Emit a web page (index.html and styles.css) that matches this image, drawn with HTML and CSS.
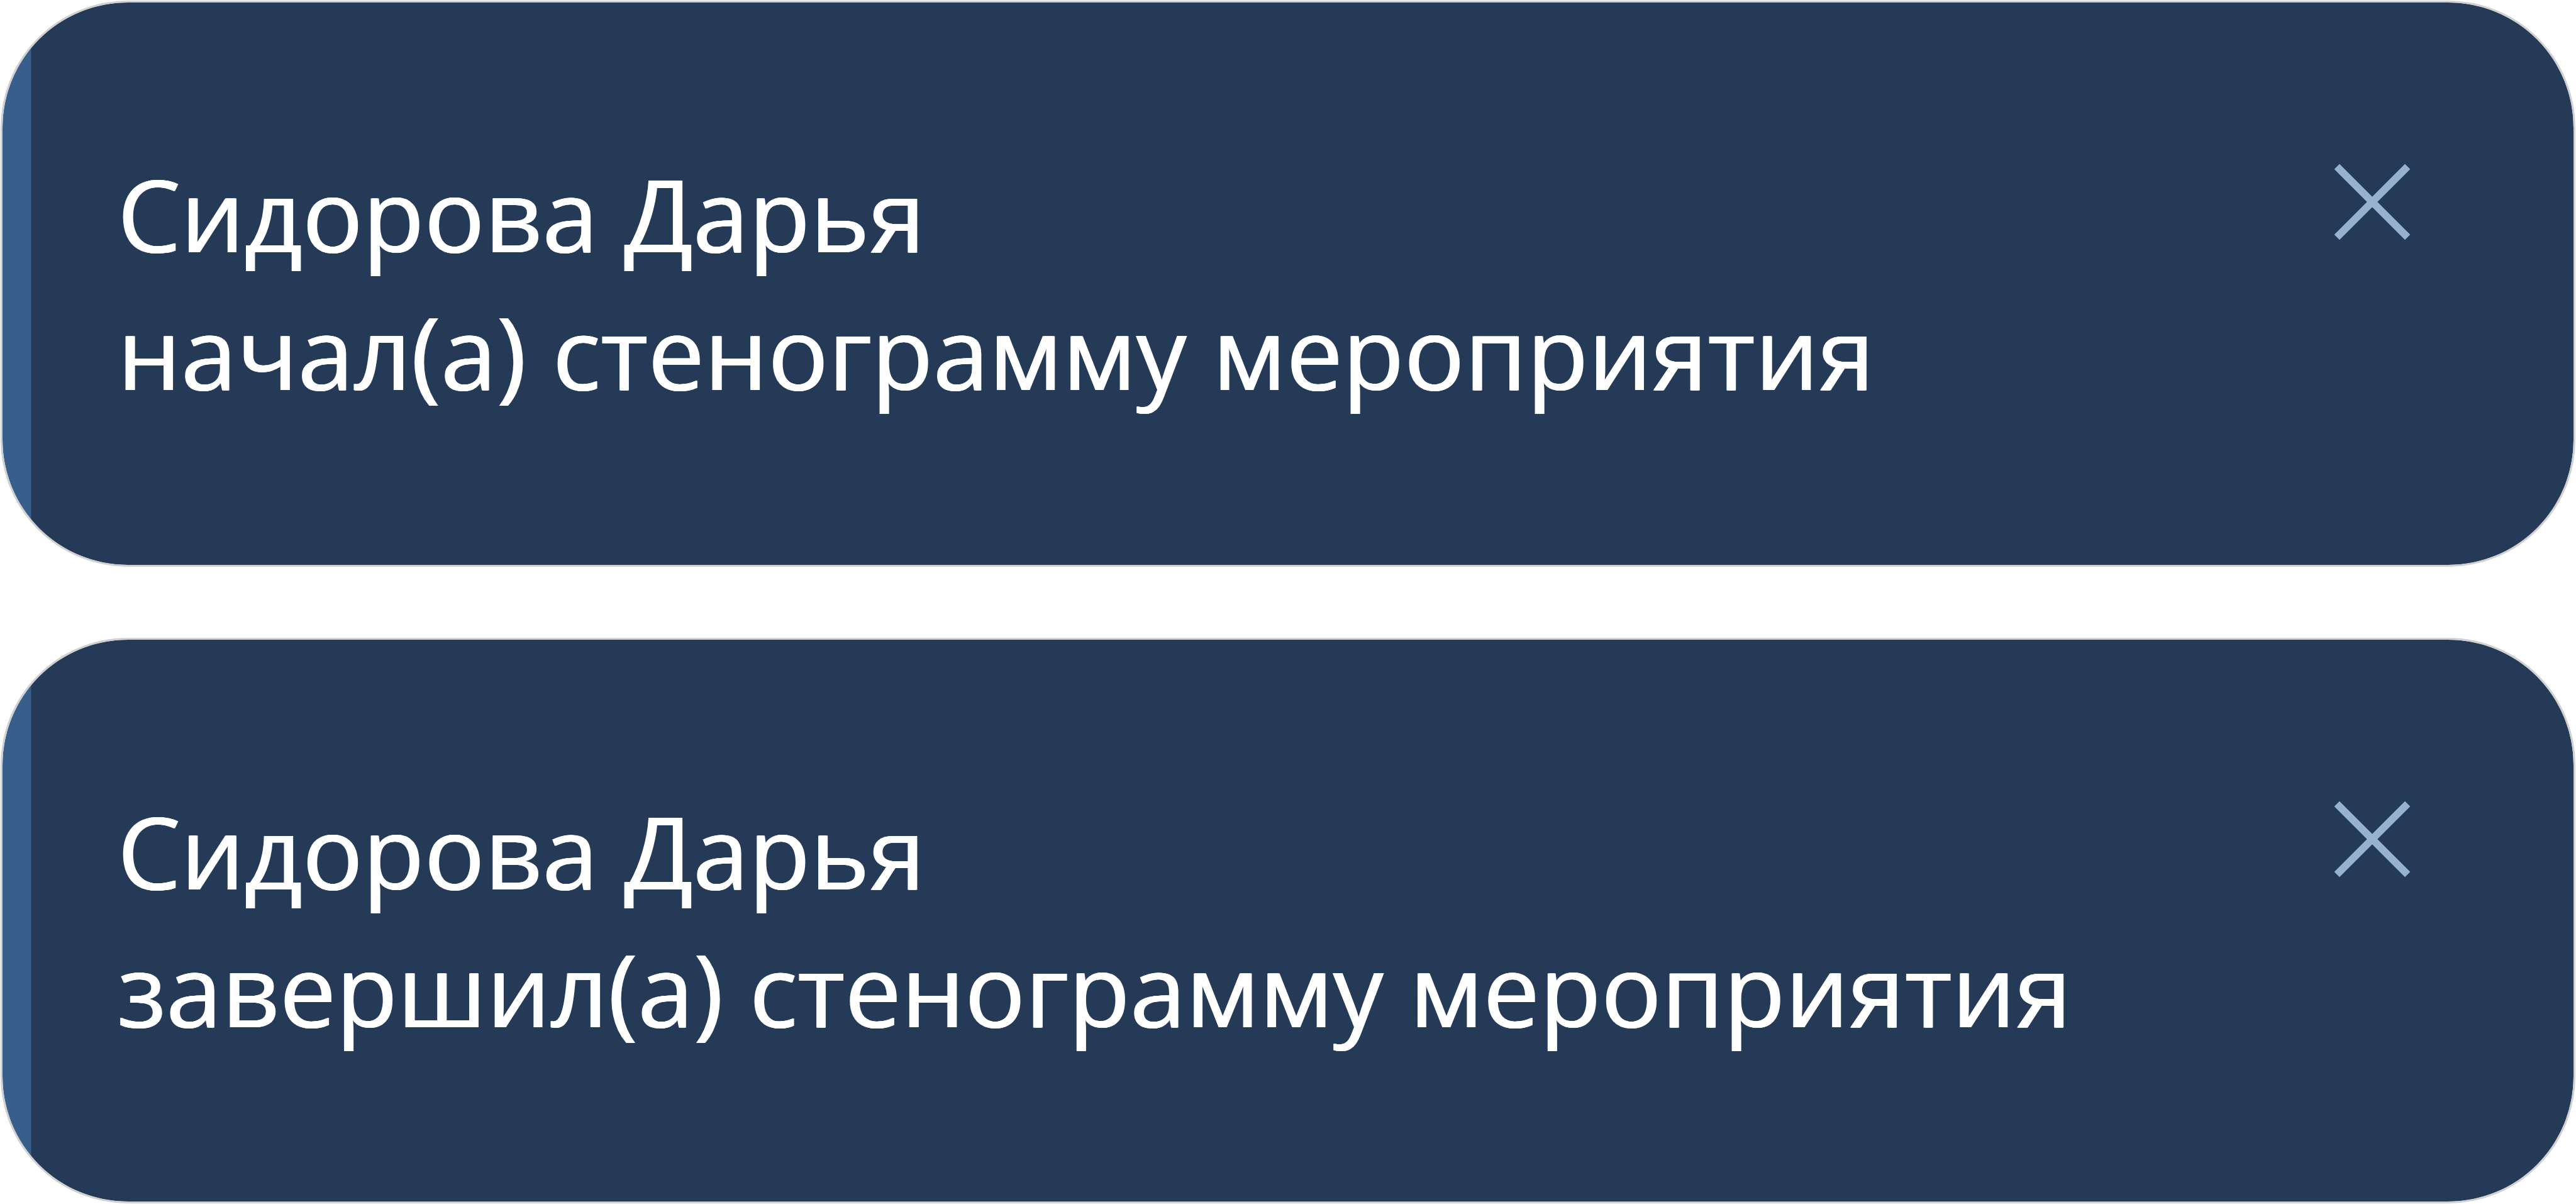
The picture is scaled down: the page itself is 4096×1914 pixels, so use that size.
FILE: index.html
```html
<!DOCTYPE html>
<html lang="ru">
<head>
<meta charset="utf-8">
<title>Уведомления</title>
<link rel="stylesheet" href="styles.css">
</head>
<body>
<main class="toasts">
  <section class="toast">
    <p class="message">Сидорова Дарья<br>начал(а) стенограмму мероприятия</p>
    <button class="close" type="button" aria-label="Закрыть">
      <svg class="close-icon" viewBox="0 0 122 122"><path d="M4.8 4.8 117.2 117.2M117.2 4.8 4.8 117.2"/></svg>
    </button>
  </section>
  <section class="toast">
    <p class="message">Сидорова Дарья<br>завершил(а) стенограмму мероприятия</p>
    <button class="close" type="button" aria-label="Закрыть">
      <svg class="close-icon" viewBox="0 0 122 122"><path d="M4.8 4.8 117.2 117.2M117.2 4.8 4.8 117.2"/></svg>
    </button>
  </section>
</main>
</body>
</html>
```
FILE: styles.css
```css
* {
  box-sizing: border-box;
}

body {
  margin: 0;
  background: #fff;
  font-family: "Open Sans", "Noto Sans", sans-serif;
}

.toasts {
  display: flex;
  flex-direction: column;
  gap: 113px;
  height: 1914px;
  padding: 1px;
}

.toast {
  flex: 1;
  display: flex;
  justify-content: space-between;
  align-items: flex-start;
  padding: 226px 259px 0 183px;
  border: 3px solid #d0d0d0;
  border-radius: 202px;
  background: linear-gradient(to right, #385f8b 45px, #243a57 46px) padding-box;
}

/* the side shadows thicken the vertical stems only */
.message {
  margin: 0;
  color: #fff;
  font-size: 159.34px;
  line-height: 219px;
  letter-spacing: 0.22px;
  white-space: nowrap;
  text-shadow: 1px 0 #fff, -1px 0 #fff;
}

.close {
  margin: 30px 0 0;
  padding: 0;
  border: 0;
  background: none;
}

.close-icon {
  display: block;
  width: 122px;
  height: 122px;
  fill: none;
  stroke: #97b2d1;
  stroke-width: 11.8;
}
```
